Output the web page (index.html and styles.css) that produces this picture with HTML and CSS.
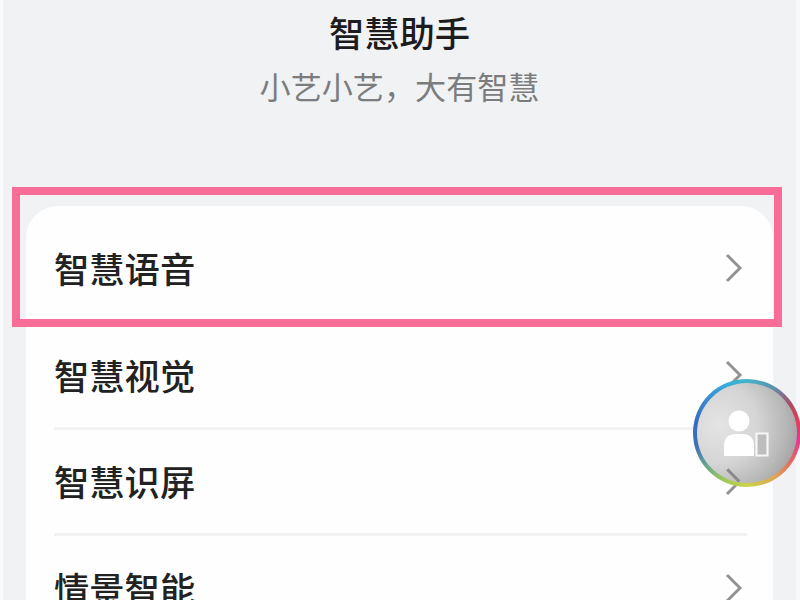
FILE: index.html
```html
<!DOCTYPE html>
<html lang="zh-CN">
<head>
<meta charset="utf-8">
<title>智慧助手</title>
<link rel="stylesheet" href="styles.css">
</head>
<body>
<main class="screen">
  <header class="header">
    <h1 class="title">智慧助手</h1>
    <p class="subtitle">小艺小艺，大有智慧</p>
  </header>
  <ul class="card">
    <li class="row"><span>智慧语音</span><svg class="chevron" viewBox="0 0 18 30"><path d="M2 2 15 15 2 28"/></svg></li>
    <li class="row"><span>智慧视觉</span><svg class="chevron" viewBox="0 0 18 30"><path d="M2 2 15 15 2 28"/></svg></li>
    <li class="row"><span>智慧识屏</span><svg class="chevron" viewBox="0 0 18 30"><path d="M2 2 15 15 2 28"/></svg></li>
    <li class="row"><span>情景智能</span><svg class="chevron" viewBox="0 0 18 30"><path d="M2 2 15 15 2 28"/></svg></li>
  </ul>
  <div class="highlight"></div>
  <div class="orb">
    <div class="orb-face">
      <svg class="orb-icon" viewBox="0 0 48 48">
        <circle cx="17" cy="11" r="10.5"/>
        <path d="M2 46V36Q2 24 14 24H20Q32 24 32 36V46Z"/>
        <path class="phone" d="M34.5 23.5H45.5V45.5H34.5Z"/>
      </svg>
    </div>
  </div>
</main>
</body>
</html>
```
FILE: styles.css
```css
* {
  box-sizing: border-box;
}

body {
  margin: 0;
  background: #f1f2f4;
  font-family: "Noto Sans CJK SC", sans-serif;
}

.screen {
  position: relative;
  width: 800px;
  height: 600px;
  overflow: hidden;
  padding: 0 27px 0 26px;
  box-shadow: inset 3px 0 #fafbfc, inset -4px 0 #f8f9fb;
}

.header {
  height: 206px;
  padding-top: 8px;
  text-align: center;
}

.title {
  margin: 0;
  font-size: 35.3px;
  line-height: 48px;
  font-weight: 500;
  color: #1c1c1e;
}

.subtitle {
  margin: 8px 0 0;
  font-size: 31.1px;
  line-height: 44px;
  color: #7b7c7e;
}

.card {
  margin: 0;
  padding: 10.5px 26px 0 28px;
  height: 460px;
  list-style: none;
  background: #fefefe;
  border-radius: 32px;
}

.row {
  display: flex;
  align-items: center;
  justify-content: space-between;
  height: 106.5px;
  border-bottom: 3px solid #f2f2f3;
  font-size: 35.3px;
  line-height: 48px;
  font-weight: 500;
  color: #222;
}

.row:first-child {
  border-bottom-color: transparent;
}

.chevron {
  width: 18px;
  height: 30px;
  margin-right: 4px;
  fill: none;
  stroke: #929292;
  stroke-width: 2.9;
}

.highlight {
  position: absolute;
  left: 12px;
  top: 187px;
  width: 770px;
  height: 140px;
  border: 8px solid #f76d98;
}

.orb {
  position: absolute;
  left: 693px;
  top: 379px;
  width: 108px;
  height: 108px;
  padding: 4px;
  border-radius: 50%;
  background: conic-gradient(#45b3c8, #5b91ad 30deg, #b34862 58deg, #e03d58 75deg, #e8388c 98deg, #df6668 120deg, #dfa557 148deg, #c9d447 180deg, #9dc55b 208deg, #69aa8c 230deg, #4172b8 255deg, #356bc3 280deg, #3b91d2 315deg, #35b0da 340deg, #45b3c8);
}

.orb-face {
  position: relative;
  width: 100%;
  height: 100%;
  border-radius: 50%;
  background: radial-gradient(circle at 22% 42%, #e4e4e5 0%, #d5d5d6 40%, #b5b5b6 70%, #8d8d8f 100%);
}

.orb-face::after {
  content: "";
  position: absolute;
  left: 27.5px;
  top: 91px;
  width: 17px;
  height: 2.5px;
  background: #8a8a8a;
  transform: rotate(45deg);
}

.orb-icon {
  position: absolute;
  left: 24.5px;
  top: 27px;
  width: 48px;
  height: 48px;
  fill: #fff;
}

.phone {
  fill: #bdbdbe;
  stroke: #f6f6f6;
  stroke-width: 2.2;
}
```
